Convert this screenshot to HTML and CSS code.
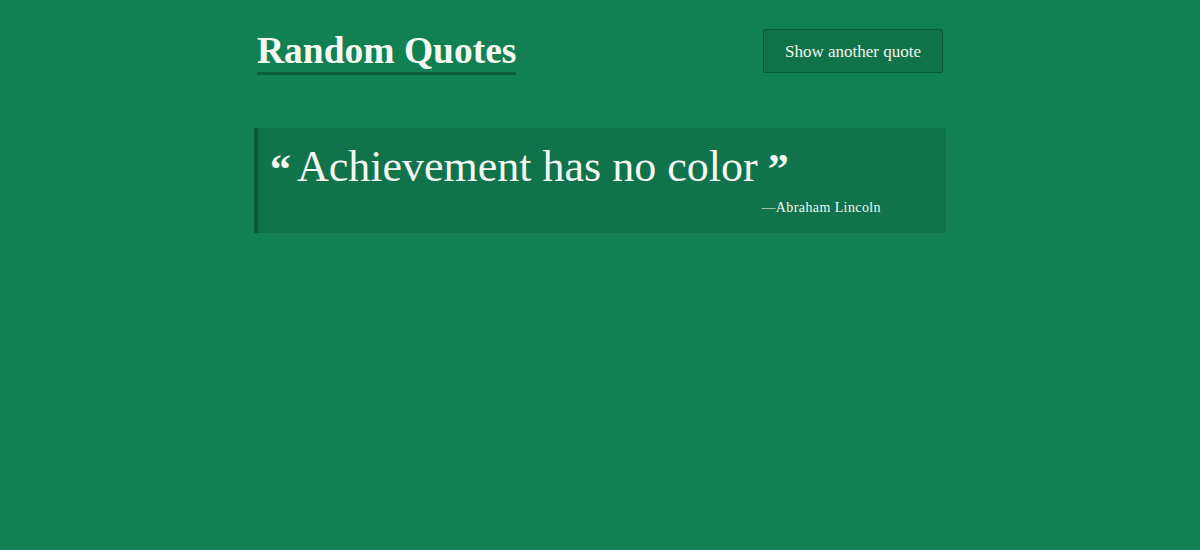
FILE: index.html
```html
<!DOCTYPE html>
<html>
<head>
<meta charset="utf-8">
<link rel="stylesheet" href="styles.css">
</head>
<body>
<div class="container">
  <header class="header">
    <h1 class="title">Random Quotes</h1>
    <button class="btn">Show another quote</button>
  </header>
  <blockquote class="quote">
    <p class="quote-text"><span class="mark">“</span>Achievement has no color<span class="mark end">”</span></p>
    <div class="author">—Abraham Lincoln</div>
  </blockquote>
</div>
</body>
</html>
```
FILE: styles.css
```css
html, body {
  margin: 0;
  padding: 0;
  background: #118153;
  color: #f3f7f1;
  font-family: "Liberation Serif", "DejaVu Serif", serif;
  height: 100%;
}
.container {
  width: 692px;
  margin: 0 auto;
  padding-top: 29px;
}
.header {
  display: flex;
  justify-content: space-between;
  align-items: flex-start;
  padding-left: 3px;
  padding-right: 3px;
}
.title {
  margin: 0;
  font-size: 37.5px;
  font-weight: bold;
  line-height: 42px;
  padding-top: 1px;
  border-bottom: 3px solid #0c5e3a;
  color: #f6f8f2;
}
.btn {
  width: 180px;
  height: 44px;
  background: #107249;
  border: 1px solid #0b5a39;
  border-radius: 2px;
  color: #f1f5ee;
  font-family: "Liberation Serif", "DejaVu Serif", serif;
  font-size: 17px;
  padding: 2px 0 0 0;
  cursor: pointer;
}
.quote {
  margin: 53px 0 0 0;
  background: #10734b;
  border-left: 4px solid #0a5a37;
  border-radius: 0 3px 3px 0;
  padding: 14px 0 0 12px;
  height: 105px;
  box-sizing: border-box;
}
.quote-text {
  margin: 0;
  font-size: 44px;
  line-height: 50px;
  color: #f4f7f2;
}
.mark {
  font-weight: bold;
  font-size: 42px;
  vertical-align: -2px;
  margin-right: 6px;
}
.mark.end {
  margin-left: 10px;
  margin-right: 0;
}
.author {
  text-align: right;
  font-size: 14px;
  padding-right: 65px;
  margin-top: 6px;
  letter-spacing: 0.4px;
}
```
